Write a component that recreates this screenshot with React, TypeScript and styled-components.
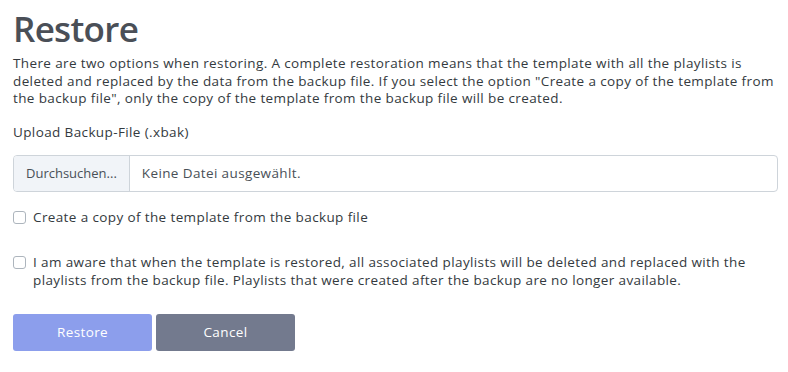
import styled, { createGlobalStyle } from 'styled-components'

const GlobalStyle = createGlobalStyle`
  body {
    margin: 0;
    background: #ffffff;
    font-family: 'Open Sans', 'Liberation Sans', sans-serif;
    color: #343a40;
  }
`

const App = () => {
  return (
    <>
      <GlobalStyle />
      <Page>
        <Title>Restore</Title>
        <Intro>
          There are two options when restoring. A complete restoration means that the template with all
          the playlists is<br />
          deleted and replaced by the data from the backup file. If you select the option "Create a copy
          of the template from<br />
          the backup file", only the copy of the template from the backup file will be created.
        </Intro>
        <Label>Upload Backup-File (.xbak)</Label>
        <FileInput>
          <BrowseButton>Durchsuchen...</BrowseButton>
          <FileName>Keine Datei ausgewählt.</FileName>
        </FileInput>
        <CheckRow>
          <Box />
          <span>Create a copy of the template from the backup file</span>
        </CheckRow>
        <CheckRow $spaced>
          <Box />
          <span>
            I am aware that when the template is restored, all associated playlists will be deleted and
            replaced with the<br />
            playlists from the backup file. Playlists that were created after the backup are no longer
            available.
          </span>
        </CheckRow>
        <Actions>
          <Button $variant='primary'>Restore</Button>
          <Button $variant='secondary'>Cancel</Button>
        </Actions>
      </Page>
    </>
  )
}

const Page = styled.div`
  padding: 8px 10px 0 13px;
  width: 765px;
  font-size: 13.5px;
  letter-spacing: 0.38px;
`

const Title = styled.h1`
  margin: 0 0 5px 0;
  font-size: 35px;
  font-weight: 600;
  line-height: 42px;
  letter-spacing: -0.7px;
  color: #4a4f57;
`

const Intro = styled.p`
  margin: 0 0 15px 0;
  line-height: 17.5px;
  color: #343a40;
  white-space: nowrap;
`

const Label = styled.div`
  line-height: 18px;
  margin-bottom: 14px;
  color: #343a40;
`

const FileInput = styled.div`
  display: flex;
  height: 37px;
  border: 1px solid #ced4da;
  border-radius: 4px;
  overflow: hidden;
  box-sizing: border-box;
`

const BrowseButton = styled.div`
  display: flex;
  align-items: center;
  padding: 0 12px;
  background: #f1f4f8;
  border-right: 1px solid #ced4da;
  color: #495057;
  font-size: 13px;
  letter-spacing: 0;
`

const FileName = styled.div`
  display: flex;
  align-items: center;
  padding: 0 12px;
  color: #495057;
`

const CheckRow = styled.label<{ $spaced?: boolean }>`
  display: flex;
  align-items: flex-start;
  gap: 7px;
  margin-top: ${(p) => (p.$spaced ? '27px' : '16px')};
  line-height: 18px;
  color: #343a40;
  white-space: nowrap;
`

const Box = styled.span`
  flex: none;
  width: 11px;
  height: 11px;
  margin-top: 3px;
  border: 1px solid #adb5bd;
  border-radius: 3px;
  background: #fff;
`

const Actions = styled.div`
  display: flex;
  gap: 4px;
  margin-top: 25px;
`

const Button = styled.button<{ $variant: 'primary' | 'secondary' }>`
  width: 139px;
  height: 37px;
  border: none;
  border-radius: 3px;
  font-family: inherit;
  font-size: 13.5px;
  letter-spacing: 0.38px;
  color: #ffffff;
  background: ${(p) => (p.$variant === 'primary' ? '#8c9eec' : '#737a8e')};
`

export default App
